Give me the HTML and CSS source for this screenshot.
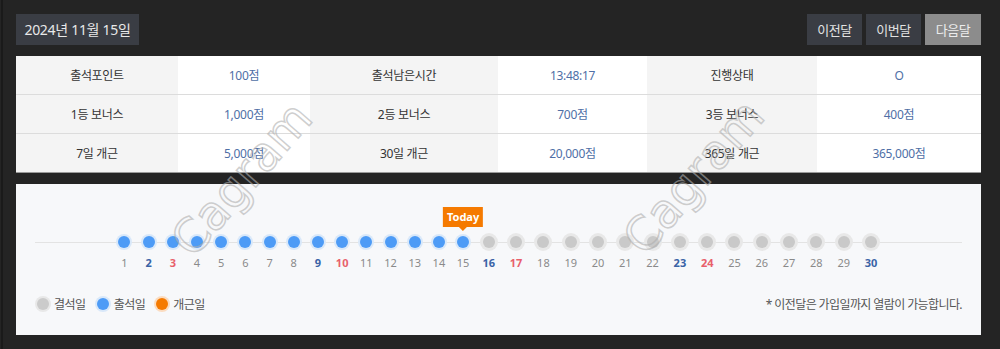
FILE: index.html
```html
<!DOCTYPE html>
<html lang="ko">
<head>
    <meta charset="UTF-8">
    <title>출석체크</title>
    <link rel="stylesheet" href="styles.css">
</head>
<body>
    <div class="page">
        <div class="head">
            <div class="date">2024년 11월 15일</div>
            <div class="months">
                <button class="month">이전달</button>
                <button class="month">이번달</button>
                <button class="month is-next">다음달</button>
            </div>
        </div>

        <table class="info">
            <colgroup>
                <col style="width:162px"><col style="width:132px"><col style="width:188px">
                <col style="width:149px"><col style="width:170px"><col style="width:164px">
            </colgroup>
            <tr>
                <th>출석포인트</th><td>100점</td>
                <th>출석남은시간</th><td>13:48:17</td>
                <th>진행상태</th><td>O</td>
            </tr>
            <tr>
                <th>1등 보너스</th><td>1,000점</td>
                <th>2등 보너스</th><td>700점</td>
                <th>3등 보너스</th><td>400점</td>
            </tr>
            <tr>
                <th>7일 개근</th><td>5,000점</td>
                <th>30일 개근</th><td>20,000점</td>
                <th>365일 개근</th><td>365,000점</td>
            </tr>
        </table>

        <div class="timeline">
            <ol class="days">
                <li class="day"><i class="dot"></i><span class="num">1</span></li>
                <li class="day sat"><i class="dot"></i><span class="num">2</span></li>
                <li class="day sun"><i class="dot"></i><span class="num">3</span></li>
                <li class="day"><i class="dot"></i><span class="num">4</span></li>
                <li class="day"><i class="dot"></i><span class="num">5</span></li>
                <li class="day"><i class="dot"></i><span class="num">6</span></li>
                <li class="day"><i class="dot"></i><span class="num">7</span></li>
                <li class="day"><i class="dot"></i><span class="num">8</span></li>
                <li class="day sat"><i class="dot"></i><span class="num">9</span></li>
                <li class="day sun"><i class="dot"></i><span class="num">10</span></li>
                <li class="day"><i class="dot"></i><span class="num">11</span></li>
                <li class="day"><i class="dot"></i><span class="num">12</span></li>
                <li class="day"><i class="dot"></i><span class="num">13</span></li>
                <li class="day"><i class="dot"></i><span class="num">14</span></li>
                <li class="day"><span class="today">Today</span><i class="dot"></i><span class="num">15</span></li>
                <li class="day off sat"><i class="dot"></i><span class="num">16</span></li>
                <li class="day off sun"><i class="dot"></i><span class="num">17</span></li>
                <li class="day off"><i class="dot"></i><span class="num">18</span></li>
                <li class="day off"><i class="dot"></i><span class="num">19</span></li>
                <li class="day off"><i class="dot"></i><span class="num">20</span></li>
                <li class="day off"><i class="dot"></i><span class="num">21</span></li>
                <li class="day off"><i class="dot"></i><span class="num">22</span></li>
                <li class="day off sat"><i class="dot"></i><span class="num">23</span></li>
                <li class="day off sun"><i class="dot"></i><span class="num">24</span></li>
                <li class="day off"><i class="dot"></i><span class="num">25</span></li>
                <li class="day off"><i class="dot"></i><span class="num">26</span></li>
                <li class="day off"><i class="dot"></i><span class="num">27</span></li>
                <li class="day off"><i class="dot"></i><span class="num">28</span></li>
                <li class="day off"><i class="dot"></i><span class="num">29</span></li>
                <li class="day off sat"><i class="dot"></i><span class="num">30</span></li>
            </ol>

            <div class="foot">
                <div class="legend">
                    <span class="legend-item"><i class="legend-dot absent"></i>결석일</span>
                    <span class="legend-item"><i class="legend-dot present"></i>출석일</span>
                    <span class="legend-item"><i class="legend-dot perfect"></i>개근일</span>
                </div>
                <p class="note">* 이전달은 가입일까지 열람이 가능합니다.</p>
            </div>
        </div>

        <!-- watermark -->
        <span class="mark mark-left">Cagram</span>
        <span class="mark mark-right">Cagram</span>
    </div>
</body>
</html>
```

FILE: styles.css
```css
body {
    margin: 0;
    background-color: #242424;
    font-family: "Noto Sans", "Noto Sans CJK KR", sans-serif;
}

.page {
    position: relative;
    padding: 14px 19px 15px 13px;
    margin-left: 1px;
    border-left: 2px solid #1a1a1a;
    overflow: hidden;
}

.head {
    display: flex;
    justify-content: space-between;
    height: 31px;
    margin-bottom: 11px;
}

.date {
    width: 123px;
    background-color: #3a3d44;
    color: #e8e8e8;
    font-size: 14px;
    line-height: 31px;
    text-align: center;
    letter-spacing: -0.3px;
}

.months {
    display: flex;
    gap: 4px;
}

.month {
    width: 55px;
    height: 31px;
    padding: 0;
    border: none;
    background-color: #3a3d44;
    color: #e2e2e2;
    font-family: inherit;
    font-size: 13px;
    letter-spacing: -0.5px;
    cursor: pointer;
}

.month.is-next {
    width: 56px;
    background-color: #8c8c8c;
    color: #ececec;
}

/* Point table */
.info {
    width: 100%;
    table-layout: fixed;
    border-collapse: collapse;
    background-color: #fff;
    border-bottom: 1px solid #9a9a9a;
    font-size: 12px;
}

.info th,
.info td {
    height: 38px;
    padding: 0;
    text-align: center;
    font-weight: 400;
    letter-spacing: -0.3px;
}

.info tr + tr th,
.info tr + tr td {
    border-top: 1px solid #dcdcdc;
}

.info th {
    background-color: #f4f4f4;
    color: #333;
}

.info td {
    color: #4f6fa6;
}

/* Timeline */
.timeline {
    margin-top: 11px;
    padding: 49px 19px 23px;
    background-color: #f7f8fa;
}

.days {
    display: flex;
    justify-content: center;
    list-style: none;
    margin: 0;
    padding: 0;
    background: linear-gradient(#e3e3e3, #e3e3e3) 0 9px / 100% 1px no-repeat;
}

.day {
    position: relative;
    display: flex;
    flex-direction: column;
    align-items: center;
    width: 24.2px;
}

.day.off {
    width: 27.3px;
}

.dot {
    width: 12px;
    height: 12px;
    margin: 3px;
    border-radius: 50%;
    background-color: #4d9bf6;
    box-shadow: 0 0 0 2px #d9e8f9;
}

.off .dot {
    background-color: #c9c9c9;
    box-shadow: 0 0 0 3px #e8e8e8;
}

.num {
    margin-top: 5px;
    font-size: 11px;
    line-height: 14px;
    color: #8a8a8a;
}

.sat .num {
    color: #3a63a6;
    font-weight: 700;
}

.sun .num {
    color: #e8606b;
    font-weight: 700;
}

.today {
    position: absolute;
    top: -26px;
    left: 50%;
    transform: translateX(-50%);
    padding: 0 4px;
    background-color: #f57a00;
    color: #fff;
    font-size: 11px;
    font-weight: 700;
    line-height: 20px;
    white-space: nowrap;
}

.today::after {
    content: "";
    position: absolute;
    top: 100%;
    left: 50%;
    margin-left: -4px;
    border: 4px solid transparent;
    border-top-color: #f57a00;
    border-bottom: 0;
}

.foot {
    display: flex;
    justify-content: space-between;
    align-items: center;
    margin-top: 26px;
    height: 16px;
    font-size: 12px;
    color: #555;
}

.legend {
    display: flex;
    gap: 9px;
}

.legend-item {
    display: flex;
    align-items: center;
    gap: 5px;
    letter-spacing: -0.5px;
}

.legend-dot {
    width: 12px;
    height: 12px;
    margin-left: 2px;
    border-radius: 50%;
}

.legend-dot.absent {
    background-color: #cbcbcb;
    box-shadow: 0 0 0 2px #e8e8e8;
}

.legend-dot.present {
    background-color: #4d9bf6;
    box-shadow: 0 0 0 2px #d9e8f9;
}

.legend-dot.perfect {
    background-color: #f57a00;
    box-shadow: 0 0 0 2px #fbdcc0;
}

.note {
    margin: 0;
    letter-spacing: -0.6px;
}

/* Watermark overlay */
.mark {
    position: absolute;
    font-family: "DejaVu Sans", sans-serif;
    font-size: 47px;
    line-height: 54px;
    color: transparent;
    -webkit-text-stroke: 1.5px rgba(175, 175, 175, 0.6);
    transform: rotate(-49deg);
    pointer-events: none;
}

.mark-left {
    left: 146px;
    top: 152px;
}

.mark-right {
    left: 598px;
    top: 150px;
}
```
